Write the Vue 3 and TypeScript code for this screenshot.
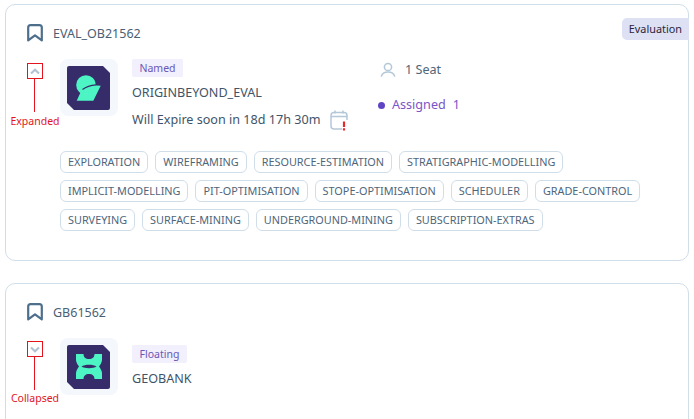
<script setup lang="ts">
const tagRows: string[][] = [
  ['EXPLORATION', 'WIREFRAMING', 'RESOURCE-ESTIMATION', 'STRATIGRAPHIC-MODELLING'],
  ['IMPLICIT-MODELLING', 'PIT-OPTIMISATION', 'STOPE-OPTIMISATION', 'SCHEDULER', 'GRADE-CONTROL'],
  ['SURVEYING', 'SURFACE-MINING', 'UNDERGROUND-MINING', 'SUBSCRIPTION-EXTRAS'],
]
</script>

<template>
  <div class="page">
    <section class="card first">
      <div class="ribbon">Evaluation</div>
      <div class="head">
        <svg class="mark" width="16" height="18" viewBox="0 0 16 18" fill="none">
          <path d="M1.2 16.4V3.5C1.2 2.1 2.2 1.1 3.6 1.1H12.4C13.800 1.1 14.800 2.1 14.800 3.500V16.400L8 11.400Z" stroke="#4d6f8c" stroke-width="2.2" stroke-linejoin="round" />
        </svg>
        <span class="code">EVAL_OB21562</span>
      </div>
      <div class="body">
        <div class="toggle">
          <div class="box">
            <svg width="10" height="7" viewBox="0 0 10 7" fill="none"><path d="M1 5.500L5 1.800L9 5.500" stroke="#b3c2d2" stroke-width="2.200" /></svg>
          </div>
          <div class="stem"></div>
          <div class="note">Expanded</div>
        </div>
        <div class="logo">
          <svg class="logo-art" width="43" height="44" viewBox="0 0 43 44">
            <path d="M0 2a2 2 0 0 1 2-2H36L43 7V42a2 2 0 0 1-2 2H7L0 37Z" fill="#372c6a" />
            <circle cx="19" cy="19" r="9.800" fill="#4df5c4" />
            <path d="M16 21C22 18.500 28 19.500 33.700 19.700L26.300 34.700H9.700Z" fill="#4df5c4" />
            <path d="M15.500 23.500C19.500 20.500 24 19.300 29 18.900" fill="none" stroke="#372c6a" stroke-width="1.200" />
          </svg>
        </div>
        <div class="info">
          <span class="pill">Named</span>
          <div class="name">ORIGINBEYOND_EVAL</div>
          <div class="expire">
            <span>Will Expire soon in 18d 17h 30m</span>
            <svg class="cal" width="19" height="21" viewBox="0 0 19 21" fill="none">
              <path d="M12 19H4C2.300 19 1 17.700 1 16V5.500C1 3.800 2.300 2.500 4 2.500H14C15.700 2.500 17 3.800 17 5.500V10" stroke="#b4c8d8" stroke-width="1.500" />
              <path d="M1 6.500H17M5 0.500V3.500M13 0.500V3.500" stroke="#b4c8d8" stroke-width="1.500" />
              <path d="M14 11.500V17M14 18.300V20.500" stroke="#e5282e" stroke-width="2.200" />
            </svg>
          </div>
        </div>
        <div class="seats">
          <div class="seat">
            <svg width="16" height="16" viewBox="0 0 16 16" fill="none">
              <circle cx="8" cy="5" r="3.600" stroke="#b4c8d8" stroke-width="1.500" />
              <path d="M1.200 14.600C2 11.500 4.500 10 8 10C11.500 10 14 11.500 14.800 14.600" stroke="#b4c8d8" stroke-width="1.500" />
            </svg>
            <span>1 Seat</span>
          </div>
          <div class="assigned">
            <i class="dot"></i>
            <span>Assigned</span>
            <span>1</span>
          </div>
        </div>
      </div>
      <div class="tags">
        <div v-for="(row, r) in tagRows" :key="r" class="tag-row">
          <span v-for="t in row" :key="t" class="tag">{{ t }}</span>
        </div>
      </div>
    </section>

    <section class="card second">
      <div class="head">
        <svg class="mark" width="16" height="18" viewBox="0 0 16 18" fill="none">
          <path d="M1.2 16.4V3.5C1.2 2.1 2.2 1.1 3.6 1.1H12.4C13.800 1.1 14.800 2.1 14.800 3.500V16.400L8 11.400Z" stroke="#4d6f8c" stroke-width="2.2" stroke-linejoin="round" />
        </svg>
        <span class="code">GB61562</span>
      </div>
      <div class="body">
        <div class="toggle toggle-2">
          <div class="box">
            <svg width="10" height="7" viewBox="0 0 10 7" fill="none"><path d="M1 1.500L5 5.200L9 1.500" stroke="#b3c2d2" stroke-width="2.200" /></svg>
          </div>
          <div class="stem"></div>
          <div class="note">Collapsed</div>
        </div>
        <div class="logo">
          <svg class="logo-art" width="43" height="44" viewBox="0 0 43 44">
            <path d="M0 2a2 2 0 0 1 2-2H36L43 7V42a2 2 0 0 1-2 2H7L0 37Z" fill="#372c6a" />
            <path d="M9 9H16.500C16.500 12 18.500 14 22 14C25.500 14 27.500 12 27.500 9H35V15C35 17.500 33 20 32 21.500C33 23 35 25.500 35 28V34H27.500C27.500 31 25.500 29 22 29C18.500 29 16.500 31 16.500 34H9V28C9 25.500 11 23 12 21.500C11 20 9 17.500 9 15Z" fill="#4df5c4" />
            <path d="M14.500 21.500C17.500 19.300 26.500 19.300 29.500 21.500C26.500 23.700 17.500 23.700 14.500 21.500Z" fill="#372c6a" />
          </svg>
        </div>
        <div class="info info-2">
          <span class="pill">Floating</span>
          <div class="name">GEOBANK</div>
        </div>
      </div>
    </section>
  </div>
</template>

<style>
html, body { margin: 0; background: #fff; overflow: hidden; }
</style>

<style scoped>
.page {
  width: 694px;
  height: 419px;
  overflow: hidden;
  box-sizing: border-box;
  padding: 4px 5px 0;
  display: flex;
  flex-direction: column;
  gap: 22px;
  font-family: "Noto Sans", sans-serif;
  color: #3f5468;
}
.card {
  position: relative;
  flex: none;
  box-sizing: border-box;
  border: 1px solid #d0deea;
  border-radius: 10px;
  padding: 18px 0 0 21px;
  background: #fff;
}
.first { height: 257px; }
.second { height: 200px; }
.ribbon {
  position: absolute;
  top: 13px;
  right: -1px;
  height: 22px;
  line-height: 22px;
  padding: 0 7px;
  background: #dde1f3;
  border-radius: 5px 0 0 5px;
  font-size: 10.85px;
  color: #2b2440;
}
.head {
  display: flex;
  align-items: center;
  gap: 10px;
  height: 20px;
}
.mark { flex: none; }
.code { font-size: 12.5px; color: #4a6073; }
.body {
  display: flex;
  margin-top: 16px;
}
.toggle {
  position: relative;
  width: 33px;
  flex: none;
  padding-top: 4px;
}
.toggle-2 { padding-top: 3px; }
.box {
  width: 14px;
  height: 14px;
  border: 1px solid #e3141e;
  display: flex;
  align-items: center;
  justify-content: center;
}
.stem {
  width: 1px;
  height: 33px;
  background: #e3141e;
  margin-left: 7px;
}
.note {
  position: absolute;
  top: 55px;
  left: -17px;
  width: 50px;
  text-align: center;
  font-size: 10.5px;
  color: #e3141e;
  white-space: nowrap;
}
.toggle-2 .note { top: 53px; }
.logo {
  flex: none;
  box-sizing: border-box;
  width: 58px;
  height: 57px;
  padding: 7px 0 0 7px;
  border-radius: 8px;
  background: #f4f7fb;
}
.logo-art { display: block; }
.info {
  margin-left: 14px;
  width: 248px;
  flex: none;
  display: flex;
  flex-direction: column;
  align-items: flex-start;
}
.info-2 { padding-top: 7px; }
.pill {
  height: 18px;
  line-height: 18px;
  padding: 0 7.5px;
  background: #f1f0fc;
  border-radius: 2px;
  font-size: 10.5px;
  color: #6a57b6;
}
.name {
  margin-top: 7px;
  font-size: 12.6px;
  line-height: 18px;
  color: #3f5468;
}
.expire {
  margin-top: 7px;
  display: flex;
  align-items: center;
  gap: 9px;
  font-size: 12.6px;
  line-height: 22px;
  white-space: nowrap;
}
.cal { margin: 0 0 0 1px; }
.seats { padding-top: 2px; }
.seat {
  display: flex;
  align-items: center;
  gap: 9px;
  font-size: 12.6px;
  line-height: 18px;
  color: #4f667a;
}
.assigned {
  margin-top: 17px;
  display: flex;
  align-items: center;
  font-size: 12.6px;
  line-height: 18px;
  color: #7a55c7;
  margin-left: -2px;
}
.dot {
  width: 7px;
  height: 7px;
  border-radius: 50%;
  background: #5f45c4;
  margin-right: 7px;
}
.assigned span + span { margin-left: 7px; }
.tags {
  margin: 20px 0 0 33px;
  display: flex;
  flex-direction: column;
  gap: 7px;
}
.tag-row { display: flex; gap: 7px; }
.tag {
  box-sizing: border-box;
  height: 22px;
  line-height: 20px;
  padding: 0 7px;
  border: 1px solid #d0deea;
  border-radius: 6px;
  font-size: 10.85px;
  color: #4f667a;
  white-space: nowrap;
}
</style>
